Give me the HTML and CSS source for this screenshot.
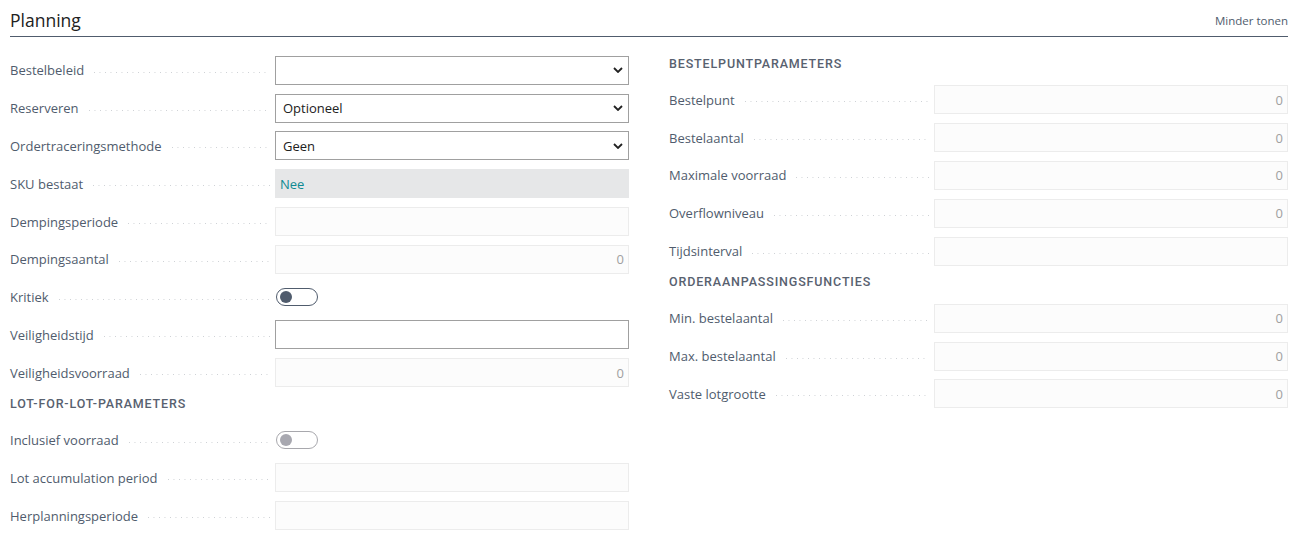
FILE: index.html
```html
<!DOCTYPE html>
<html lang="nl">
<head>
<meta charset="utf-8">
<title>Planning</title>
<link rel="stylesheet" href="styles.css">
</head>
<body>
<div class="page">
  <header class="head">
    <h1 class="title">Planning</h1>
    <span class="more">Minder tonen</span>
  </header>
  <div class="cols">
    <div class="col">
      <div class="row"><span class="lbl">Bestelbeleid</span><span class="dots"></span><div class="sel"><span class="val"></span><svg class="chev" viewBox="0 0 10 6"><path d="M1 1 L5 5 L9 1"/></svg></div></div>
      <div class="row"><span class="lbl">Reserveren</span><span class="dots"></span><div class="sel"><span class="val">Optioneel</span><svg class="chev" viewBox="0 0 10 6"><path d="M1 1 L5 5 L9 1"/></svg></div></div>
      <div class="row"><span class="lbl">Ordertraceringsmethode</span><span class="dots"></span><div class="sel"><span class="val">Geen</span><svg class="chev" viewBox="0 0 10 6"><path d="M1 1 L5 5 L9 1"/></svg></div></div>
      <div class="row"><span class="lbl">SKU bestaat</span><span class="dots"></span><div class="ro"><span class="link">Nee</span></div></div>
      <div class="row"><span class="lbl">Dempingsperiode</span><span class="dots"></span><div class="dis"></div></div>
      <div class="row"><span class="lbl">Dempingsaantal</span><span class="dots"></span><div class="dis num">0</div></div>
      <div class="row"><span class="lbl">Kritiek</span><span class="dots"></span><div class="fieldwrap"><span class="toggle"><span class="knob"></span></span></div></div>
      <div class="row"><span class="lbl">Veiligheidstijd</span><span class="dots"></span><div class="inp"></div></div>
      <div class="row"><span class="lbl">Veiligheidsvoorraad</span><span class="dots"></span><div class="dis num">0</div></div>
      <h2 class="group">LOT-FOR-LOT-PARAMETERS</h2>
      <div class="row"><span class="lbl">Inclusief voorraad</span><span class="dots"></span><div class="fieldwrap"><span class="toggle off"><span class="knob"></span></span></div></div>
      <div class="row"><span class="lbl">Lot accumulation period</span><span class="dots"></span><div class="dis"></div></div>
      <div class="row"><span class="lbl">Herplanningsperiode</span><span class="dots"></span><div class="dis"></div></div>
    </div>
    <div class="col">
      <h2 class="group">BESTELPUNTPARAMETERS</h2>
      <div class="row"><span class="lbl">Bestelpunt</span><span class="dots"></span><div class="dis num">0</div></div>
      <div class="row"><span class="lbl">Bestelaantal</span><span class="dots"></span><div class="dis num">0</div></div>
      <div class="row"><span class="lbl">Maximale voorraad</span><span class="dots"></span><div class="dis num">0</div></div>
      <div class="row"><span class="lbl">Overflowniveau</span><span class="dots"></span><div class="dis num">0</div></div>
      <div class="row"><span class="lbl">Tijdsinterval</span><span class="dots"></span><div class="dis"></div></div>
      <h2 class="group">ORDERAANPASSINGSFUNCTIES</h2>
      <div class="row"><span class="lbl">Min. bestelaantal</span><span class="dots"></span><div class="dis num">0</div></div>
      <div class="row"><span class="lbl">Max. bestelaantal</span><span class="dots"></span><div class="dis num">0</div></div>
      <div class="row"><span class="lbl">Vaste lotgrootte</span><span class="dots"></span><div class="dis num">0</div></div>
    </div>
  </div>
</div>
</body>
</html>
```

FILE: styles.css
```css
* { box-sizing: border-box; }
html, body { margin: 0; padding: 0; background: #fff; }
body {
  font-family: "Open Sans", "Noto Sans", "Liberation Sans", sans-serif;
  font-size: 13px;
  color: #212121;
}
.page { padding: 0 14px 0 10px; }
.head {
  height: 37px;
  display: flex;
  align-items: flex-end;
  justify-content: space-between;
  border-bottom: 1px solid #505c6d;
  padding-bottom: 4px;
}
.title {
  margin: 0;
  font-size: 17.5px;
  font-weight: 400;
  line-height: 24px;
  color: #212121;
}
.more {
  font-size: 11.5px;
  color: #505c6d;
  line-height: 16px;
  padding-bottom: 3px;
}
.cols {
  display: grid;
  grid-template-columns: 1fr 1fr;
  column-gap: 40px;
  padding-top: 14.5px;
}
.col { display: flex; flex-direction: column; }
.row {
  height: 37.8px;
  display: flex;
  align-items: center;
}
.lbl {
  color: #505c6d;
  white-space: nowrap;
  line-height: 20px;
}
.dots {
  flex: 1;
  height: 1px;
  margin: 4px 5px 0 10px;
  align-self: center;
  background-image: linear-gradient(to right, #cdd0d4 1px, transparent 1px);
  background-size: 5.5px 1px;
  background-repeat: repeat-x;
}
.sel, .ro, .dis, .inp, .fieldwrap {
  width: 354px;
  height: 29px;
  flex: none;
  display: flex;
  align-items: center;
  padding: 0 8px;
}
.sel {
  border: 1px solid #a0a0a0;
  background: #fff;
  justify-content: space-between;
  padding-left: 7px;
}
.chev {
  width: 10px;
  height: 6px;
  fill: none;
  stroke: #212121;
  stroke-width: 1.8;
  margin-right: -3px;
}
.ro { background: #e6e7e8; padding-left: 5px; }
.link { color: #0f8a92; }
.dis {
  border: 1px solid #ececec;
  background: #fcfcfc;
  color: #a0a0a0;
}
.dis.num { justify-content: flex-end; padding-right: 4px; }
.inp { border: 1px solid #a0a0a0; background: #fff; }
.fieldwrap { padding: 0 1px; }
.toggle {
  width: 42px;
  height: 18px;
  border: 1px solid #505c6d;
  border-radius: 9px;
  display: flex;
  align-items: center;
  padding-left: 3px;
}
.knob {
  width: 12px;
  height: 12px;
  border-radius: 50%;
  background: #505c6d;
}
.toggle.off { border-color: #a8a8ad; }
.toggle.off .knob { background: #a8a8b0; }
.group {
  margin: 0;
  height: 29.5px;
  padding-top: 2.5px;
  line-height: 20px;
  font-family: "Roboto", "DejaVu Sans Condensed", sans-serif;
  font-size: 12.5px;
  font-weight: 500;
  letter-spacing: 0.85px;
  color: #58616f;
}
```
